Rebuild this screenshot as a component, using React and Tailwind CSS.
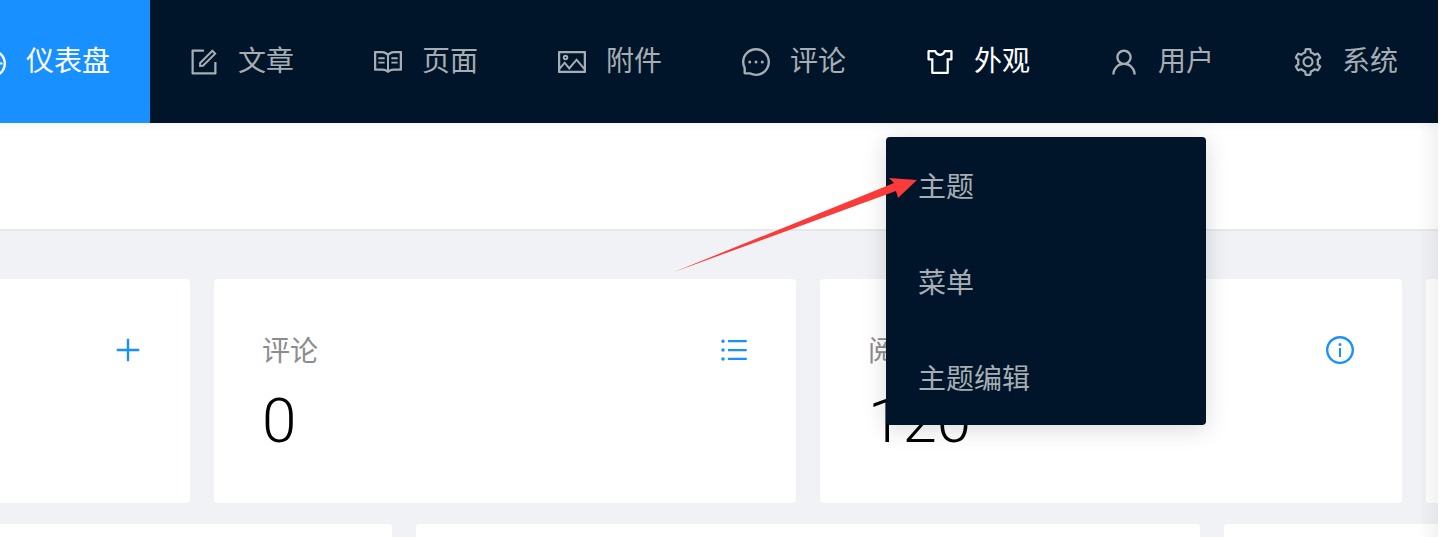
import {
  AiOutlineDashboard,
  AiOutlineForm,
  AiOutlineRead,
  AiOutlinePicture,
  AiOutlineMessage,
  AiOutlineSkin,
  AiOutlineUser,
  AiOutlineSetting,
  AiOutlinePlus,
  AiOutlineUnorderedList,
  AiOutlineInfoCircle,
} from "react-icons/ai";

const navItems = [
  { label: "仪表盘", icon: AiOutlineDashboard, active: true },
  { label: "文章", icon: AiOutlineForm },
  { label: "页面", icon: AiOutlineRead },
  { label: "附件", icon: AiOutlinePicture },
  { label: "评论", icon: AiOutlineMessage },
  { label: "外观", icon: AiOutlineSkin, open: true },
  { label: "用户", icon: AiOutlineUser },
  { label: "系统", icon: AiOutlineSetting },
];

const stats = [
  { label: "文章", value: "0", icon: AiOutlinePlus },
  { label: "评论", value: "0", icon: AiOutlineUnorderedList },
  { label: "阅读量", value: "120", icon: AiOutlineInfoCircle },
];

// react-icons 的 ant 图标留白比原版大，所以用 32px 画 28px 的效果
const StatCard = ({ label, value, icon: Icon }) => (
  <div className="w-[582px] h-[224px] shrink-0 rounded bg-white px-12 pt-[50px]">
    <div className="flex items-center justify-between h-11">
      <span className="pt-0.5 text-[28px] leading-[44px] text-[#8c8c8c]">{label}</span>
      <Icon className="-mr-0.5 -mt-0.5 text-[32px] text-[#1890ff]" />
    </div>
    <div className="mt-2.5 font-['Roboto',sans-serif] font-light text-[62px] leading-[76px] text-black">{value}</div>
  </div>
);

const App = () => {
  return (
    <div className="relative w-[1438px] h-[537px] overflow-hidden bg-[#f0f2f5] font-['Liberation_Sans','Noto_Sans_CJK_SC',sans-serif]">
      {/* 顶部导航 */}
      <nav className="relative z-10 flex h-[123px] -ml-[62px] bg-[#001529] shadow-[0_2px_8px_rgba(0,0,0,0.06)]">
        {navItems.map(({ label, icon: Icon, active, open }) => (
          <div
            key={label}
            className={`flex items-center gap-[18px] px-[38px] shrink-0 text-[28px] ${
              active ? "bg-[#1890ff] text-white" : open ? "text-white" : "text-[#a6adb4]"
            }`}
          >
            <Icon className="text-[32px]" />
            <span className="mr-0.5">{label}</span>
          </div>
        ))}
      </nav>

      <div className="h-[108px] bg-white border-b-2 border-[#e8e8e8]" />

      {/* 统计卡片 */}
      <div className="-ml-[392px] pt-12">
        <div className="flex gap-6">
          {stats.map((item) => (
            <StatCard key={item.label} {...item} />
          ))}
          <div className="w-[582px] h-[224px] shrink-0 rounded bg-white" />
        </div>
        <div className="flex gap-6 mt-[21px]">
          <div className="w-[784px] h-[300px] shrink-0 rounded bg-white" />
          <div className="w-[784px] h-[300px] shrink-0 rounded bg-white" />
          <div className="w-[784px] h-[300px] shrink-0 rounded bg-white" />
        </div>
      </div>

      {/* 右侧阴影 */}
      <div className="absolute right-0 top-[123px] bottom-0 w-5 bg-linear-to-l from-black/5 to-transparent" />

      {/* 外观下拉菜单 */}
      <div className="absolute z-20 left-[886px] top-[137px] w-[320px] h-[288px] rounded bg-[#001529] shadow-[0_4px_24px_rgba(0,0,0,0.15)]">
        {["主题", "菜单", "主题编辑"].map((item) => (
          <div key={item} className="h-24 flex items-center pl-8 pt-1.5 text-[28px] text-[#a6adb4]">
            {item}
          </div>
        ))}
      </div>

      {/* 标注箭头 */}
      <svg className="absolute z-30 left-[670px] top-[175px]" width="250" height="100" viewBox="670 175 250 100">
        <polygon points="674,272 894,183 889,178 917,180 898,198 896,191" fill="#fb3a3a" />
      </svg>
    </div>
  );
};

export default App;
